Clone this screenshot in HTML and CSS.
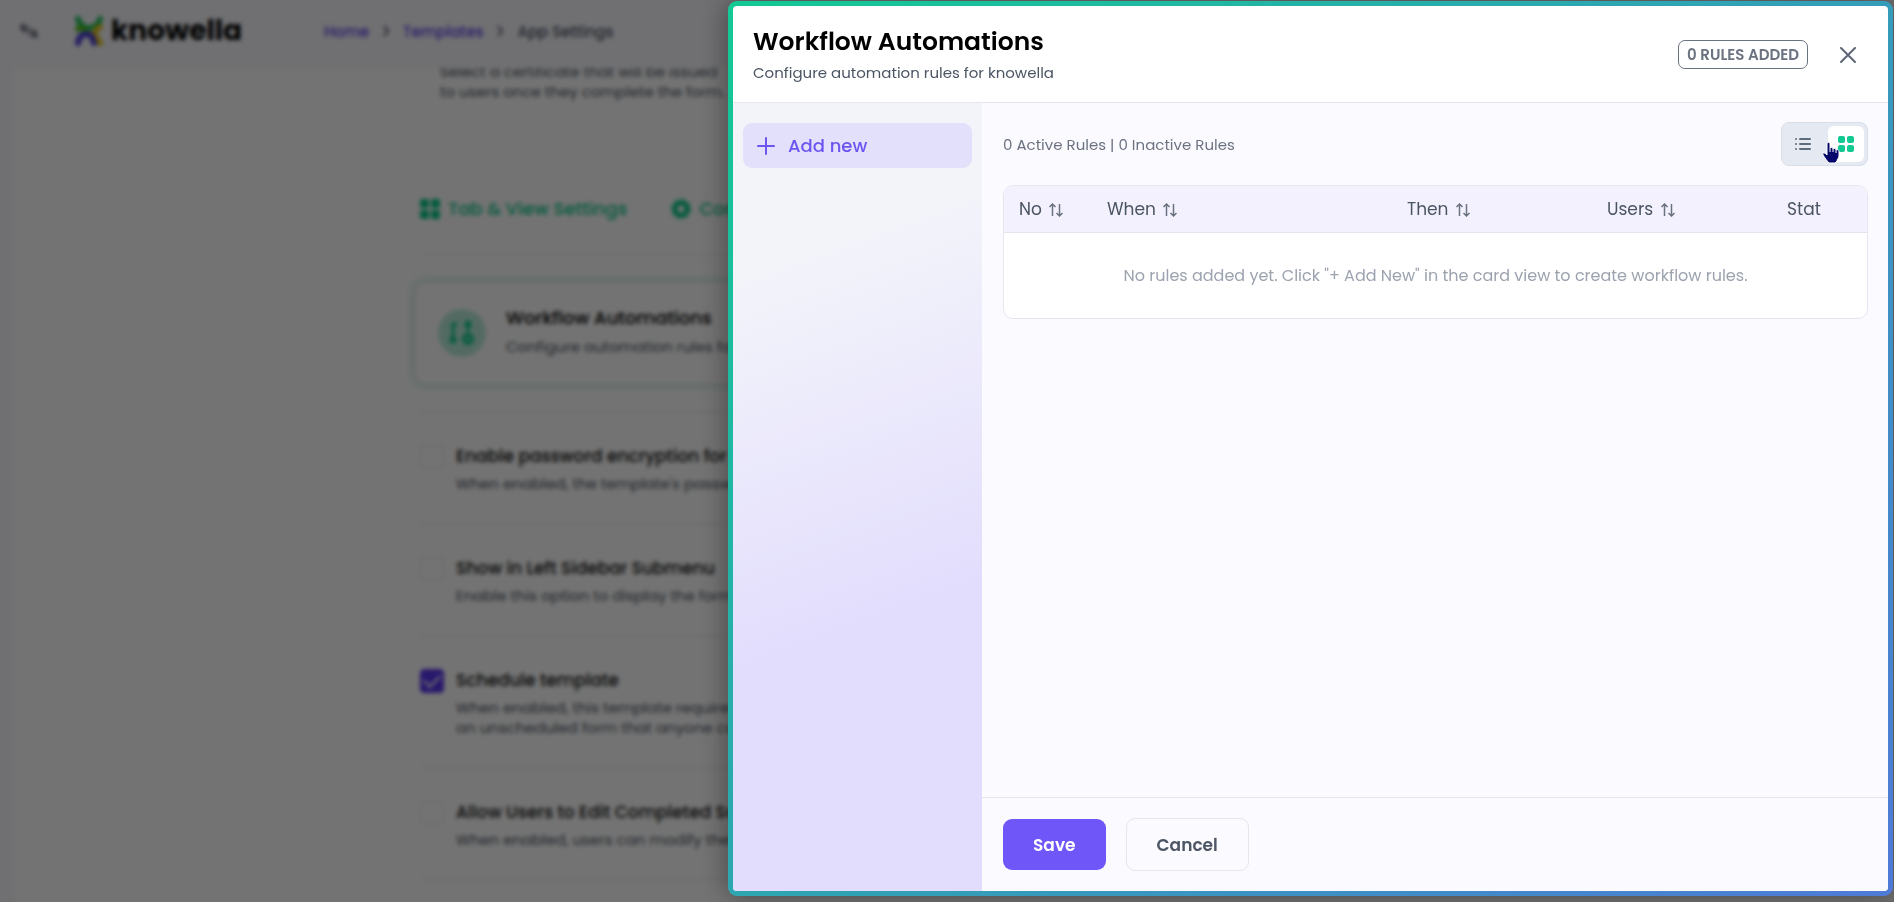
FILE: index.html
```html
<!DOCTYPE html>
<html lang="en">
<head>
  <meta charset="UTF-8">
  <meta name="viewport" content="width=device-width, initial-scale=1.0">
  <title>Workflow Automations - knowella</title>
  <link rel="stylesheet" href="styles.css">
</head>
<body>

<!-- App Settings page -->
<div class="page">
  <header class="topbar">
    <svg class="menu-icon" width="18" height="18" viewBox="0 0 18 18" fill="none" stroke="#55596b" stroke-width="2"><path d="M1 5h8M4 2L1 5l3 3M2 9h14M9 13h8M14 10l3 3-3 3"/></svg>
    <div class="logo">
      <svg width="30" height="32" viewBox="0 0 30 32" fill="none" stroke-width="6" stroke-linecap="round">
        <path d="M4 4c2 7 7 9 11 9s9-2 11-9" stroke="#22c55e"/>
        <path d="M4 14c4-2 6 0 9 3" stroke="#52c41a"/>
        <path d="M26 12c-7 3-7 7 0 16" stroke="#e5c31a"/>
        <path d="M4 28c1-7 5-9 9-9s6 4 7 9" stroke="#4a3fd6"/>
      </svg>
      <span class="logo-text">knowella</span>
    </div>
    <nav class="breadcrumb">
      <a href="#">Home</a>
      <svg width="8" height="12" viewBox="0 0 8 12" fill="none" stroke="#55596b" stroke-width="2"><path d="M2 1l4 5-4 5"/></svg>
      <a href="#">Templates</a>
      <svg width="8" height="12" viewBox="0 0 8 12" fill="none" stroke="#55596b" stroke-width="2"><path d="M2 1l4 5-4 5"/></svg>
      <span>App Settings</span>
    </nav>
  </header>

  <main class="content">
    <div class="settings">
      <p class="certificate-note">Select a certificate that will be issued<br>to users once they complete the form.</p>

      <div class="tabs">
        <a href="#" class="tab">
          <svg width="20" height="20" viewBox="0 0 20 20" fill="currentColor"><rect width="9" height="9" rx="2"/><rect x="11" width="9" height="9" rx="2"/><rect y="11" width="9" height="9" rx="2"/><rect x="11" y="11" width="9" height="9" rx="2"/></svg>
          Tab &amp; View Settings
        </a>
        <a href="#" class="tab">
          <svg width="20" height="20" viewBox="0 0 20 20" fill="none" stroke="currentColor"><circle cx="10" cy="10" r="6" stroke-width="5"/><circle cx="10" cy="10" r="9" stroke-width="2" stroke-dasharray="4 3"/></svg>
          Configuration
        </a>
      </div>

      <div class="automation-card">
        <span class="automation-icon">
          <svg width="26" height="26" viewBox="0 0 26 26" fill="none" stroke="currentColor" stroke-width="3"><path d="M8 4H4v14M19 4v8"/><circle cx="4" cy="20" r="2"/><circle cx="19" cy="4" r="2"/><circle cx="19" cy="19" r="4" stroke-width="4"/></svg>
        </span>
        <div>
          <h2>Workflow Automations</h2>
          <p>Configure automation rules for knowella</p>
        </div>
      </div>

      <div class="option">
        <input type="checkbox" id="opt-encrypt">
        <div>
          <label for="opt-encrypt">Enable password encryption for template</label>
          <p>When enabled, the template's password will be encrypted.</p>
        </div>
      </div>
      <div class="option">
        <input type="checkbox" id="opt-sidebar">
        <div>
          <label for="opt-sidebar">Show in Left Sidebar Submenu</label>
          <p>Enable this option to display the form in the left sidebar.</p>
        </div>
      </div>
      <div class="option">
        <input type="checkbox" id="opt-schedule" checked>
        <div>
          <label for="opt-schedule">Schedule template</label>
          <p>When enabled, this template requires a schedule. Otherwise it is<br>an unscheduled form that anyone can fill out.</p>
        </div>
      </div>
      <div class="option">
        <input type="checkbox" id="opt-edit">
        <div>
          <label for="opt-edit">Allow Users to Edit Completed Submissions</label>
          <p>When enabled, users can modify their completed forms.</p>
        </div>
      </div>
      <div class="option"></div>
    </div>
  </main>
</div>

<!-- Workflow Automations panel -->
<div class="overlay">
  <section class="panel" role="dialog" aria-labelledby="panel-title">
    <div class="panel-inner">
      <header class="panel-header">
        <div>
          <h1 id="panel-title">Workflow Automations</h1>
          <p>Configure automation rules for knowella</p>
        </div>
        <div class="panel-actions">
          <span class="badge">0 RULES ADDED</span>
          <button class="close-button" aria-label="Close">
            <svg width="16" height="16" viewBox="0 0 16 16" fill="none" stroke="currentColor" stroke-width="2" stroke-linecap="round"><path d="M1 1l14 14M15 1L1 15"/></svg>
          </button>
        </div>
      </header>

      <div class="panel-body">
        <aside class="sidebar">
          <button class="add-button">
            <svg width="18" height="18" viewBox="0 0 18 18" fill="none" stroke="currentColor" stroke-width="2" stroke-linecap="round"><path d="M9 1v16M1 9h16"/></svg>
            Add new
          </button>
        </aside>

        <div class="rules">
          <div class="rules-content">
            <div class="rules-toolbar">
              <span>0 Active Rules | 0 Inactive Rules</span>
              <div class="view-toggle">
                <button aria-label="List view">
                  <svg width="16" height="14" viewBox="0 0 16 14" fill="currentColor"><circle cx="1" cy="2" r="1"/><circle cx="1" cy="7" r="1"/><circle cx="1" cy="12" r="1"/><rect x="4" y="1" width="12" height="2" rx="1"/><rect x="4" y="6" width="12" height="2" rx="1"/><rect x="4" y="11" width="12" height="2" rx="1"/></svg>
                </button>
                <button class="active" aria-label="Card view">
                  <svg width="16" height="16" viewBox="0 0 16 16" fill="currentColor"><rect width="7" height="7" rx="2"/><rect x="9" width="7" height="7" rx="2"/><rect y="9" width="7" height="7" rx="2"/><rect x="9" y="9" width="7" height="7" rx="2"/></svg>
                </button>
                <svg class="cursor" width="18" height="22" viewBox="0 0 18 22" fill="#06066b" stroke="#fff" stroke-width="1"><path d="M5 2c0-2 3-2 3 0v4c1-1 3-1 3 1 1-1 3-1 3 1 1-1 3 0 3 1v5c0 2-2 3-2 5l-2 2H7c-2-2-4-5-6-8-1-2 1-3 3-1l1 1z"/><path d="M8 6v4M11 7v3M14 8v3" fill="none"/></svg>
              </div>
            </div>

            <div class="table-box">
              <table>
                <thead>
                  <tr>
                    <th class="col-no">No <svg class="sort" viewBox="0 0 14 14"><path d="M4 13V1M1 4l3-3 3 3M11 1v12M8 10l3 3 3-3"/></svg></th>
                    <th class="col-when">When <svg class="sort" viewBox="0 0 14 14"><path d="M4 13V1M1 4l3-3 3 3M11 1v12M8 10l3 3 3-3"/></svg></th>
                    <th class="col-then">Then <svg class="sort" viewBox="0 0 14 14"><path d="M4 13V1M1 4l3-3 3 3M11 1v12M8 10l3 3 3-3"/></svg></th>
                    <th class="col-users">Users <svg class="sort" viewBox="0 0 14 14"><path d="M4 13V1M1 4l3-3 3 3M11 1v12M8 10l3 3 3-3"/></svg></th>
                    <th>Stat</th>
                  </tr>
                </thead>
                <tbody>
                  <tr>
                    <td colspan="5">No rules added yet. Click "+ Add New" in the card view to create workflow rules.</td>
                  </tr>
                </tbody>
              </table>
            </div>
          </div>

          <footer class="panel-footer">
            <button class="save-button">Save</button>
            <button class="cancel-button">Cancel</button>
          </footer>
        </div>
      </div>
    </div>
  </section>
</div>

</body>
</html>
```
FILE: styles.css
```css
* {
  box-sizing: border-box;
}

body {
  margin: 0;
  height: 100vh;
  overflow: hidden;
  font-family: Poppins, Inter, sans-serif;
  font-size: 15px;
  color: #4b5563;
  background-color: #f8f8fd;
}

h1, h2, p {
  margin: 0;
}

button {
  font-family: inherit;
  border: none;
  background: none;
  padding: 0;
  cursor: pointer;
}

/* Page */
.page {
  height: 100vh;
  display: flex;
  flex-direction: column;
}

.topbar {
  height: 68px;
  flex-shrink: 0;
  display: flex;
  align-items: center;
  padding: 0 20px 6px;
}

.logo {
  display: flex;
  align-items: center;
  gap: 7px;
  width: 250px;
  margin-left: 36px;
}

.logo-text {
  font-size: 28px;
  line-height: 32px;
  font-weight: 700;
  color: #000;
}

.breadcrumb {
  display: flex;
  align-items: center;
  gap: 13px;
  font-weight: 500;
}

.breadcrumb a {
  color: #6246ea;
  text-decoration: none;
}

.content {
  flex: 1;
  min-height: 0;
  overflow: hidden;
  margin: 0 14px;
  background-color: #fff;
}

.settings {
  max-width: 1054px;
  margin: 0 auto;
}

.certificate-note {
  margin-top: -6px;
  padding: 0 0 46px 20px;
  line-height: 20px;
}

.tabs {
  display: flex;
  gap: 44px;
  padding: 50px 0 34px;
  border-bottom: 1px solid #eef0f4;
}

.tab {
  display: flex;
  align-items: center;
  gap: 8px;
  font-size: 18px;
  line-height: 22px;
  font-weight: 500;
  color: #08c98a;
  text-decoration: none;
}

.automation-card {
  display: flex;
  align-items: center;
  gap: 20px;
  height: 104px;
  margin: 26px -6px;
  padding: 0 22px;
  border: 2px solid #e6f4f0;
  border-radius: 12px;
  box-shadow: 0 0 8px 2px #d0efe5;
}

.automation-icon {
  display: flex;
  align-items: center;
  justify-content: center;
  width: 48px;
  height: 48px;
  border-radius: 50%;
  background-color: #b9ecdb;
  color: #08c98a;
}

.automation-card h2 {
  font-size: 18px;
  line-height: 28px;
  font-weight: 500;
  color: #000;
}

.automation-card p {
  line-height: 30px;
}

.option {
  display: flex;
  align-items: flex-start;
  gap: 12px;
  padding: 30px 0 29px;
  border-top: 1px solid #e3e5ec;
}

.option label {
  display: block;
  font-size: 17px;
  line-height: 28px;
  font-weight: 500;
  color: #111;
}

.option p {
  padding-top: 4px;
  line-height: 20px;
}

.option input {
  appearance: none;
  width: 24px;
  height: 24px;
  margin: 3px 0 0;
  border: 1px solid #e8e9f0;
  border-radius: 4px;
}

.option input:checked {
  display: grid;
  place-items: center;
  padding-bottom: 5px;
  background-color: #5a35ee;
  border-color: #5a35ee;
}

.option input:checked::before {
  content: "";
  width: 14px;
  height: 8px;
  border-left: 2px solid #fff;
  border-bottom: 2px solid #fff;
  transform: rotate(-45deg);
}

/* Panel */
.overlay {
  position: fixed;
  inset: 0;
  display: flex;
  justify-content: flex-end;
  padding: 1px 1px 6px 0;
  background-color: rgba(0, 0, 0, 0.55);
  backdrop-filter: blur(2px);
}

.panel {
  width: 62%;
  max-width: 1165px;
  padding: 5px;
  border-radius: 9px;
  background: linear-gradient(135deg, #12c993, #4f7ad8);
  box-shadow: 0 0 30px rgba(0, 0, 0, 0.4);
}

.panel-inner {
  height: 100%;
  display: flex;
  flex-direction: column;
  overflow: hidden;
  border-radius: 4px;
  background-color: #fff;
}

.panel-header {
  display: flex;
  align-items: center;
  justify-content: space-between;
  padding: 18px 32px 17px 20px;
  border-bottom: 1px solid #e5e7eb;
}

.panel-header h1 {
  font-size: 25px;
  line-height: 36px;
  font-weight: 600;
  color: #000;
}

.panel-header p {
  line-height: 25px;
}

.panel-actions {
  display: flex;
  align-items: center;
  gap: 32px;
}

.badge {
  padding: 0 8px;
  border: 1px solid #6b7280;
  border-radius: 7px;
  font-size: 15px;
  line-height: 27px;
  font-weight: 600;
  color: #6b7280;
}

.close-button {
  display: flex;
  color: #5f6675;
}

.panel-body {
  flex: 1;
  min-height: 0;
  display: flex;
}

.sidebar {
  width: 249px;
  flex-shrink: 0;
  padding: 20px 10px;
  background: linear-gradient(160deg, #f3f4fa 20%, #e2ddfd 65%);
}

.add-button {
  display: flex;
  align-items: center;
  gap: 13px;
  width: 100%;
  height: 45px;
  padding: 0 14px;
  border-radius: 9px;
  background-color: #e2e0fa;
  font-size: 18px;
  font-weight: 500;
  color: #6e55f0;
}

.rules {
  flex: 1;
  min-width: 0;
  display: flex;
  flex-direction: column;
  background-color: #fbfaff;
}

.rules-content {
  flex: 1;
  padding: 19px 20px 19px 21px;
}

.rules-toolbar {
  display: flex;
  align-items: center;
  justify-content: space-between;
  margin-bottom: 19px;
  color: #6b7280;
}

.view-toggle {
  position: relative;
  display: flex;
  gap: 7px;
  padding: 3px;
  border: 1px solid #d9dfe9;
  border-radius: 8px;
  background-color: #e5eaf2;
}

.view-toggle button {
  display: flex;
  align-items: center;
  justify-content: center;
  width: 36px;
  height: 36px;
  border-radius: 6px;
  color: #5f6b7a;
}

.view-toggle .active {
  background-color: #fff;
  color: #12c893;
}

.cursor {
  position: absolute;
  left: 40px;
  top: 19px;
}

.table-box {
  overflow: hidden;
  border: 1px solid #e5e7f0;
  border-radius: 10px;
  background-color: #fff;
}

table {
  width: 100%;
  table-layout: fixed;
  border-collapse: collapse;
}

th {
  height: 46px;
  padding: 0 0 0 15px;
  border-bottom: 1px solid #e2e6ec;
  background-color: #f3f1fe;
  font-size: 17px;
  font-weight: 400;
  text-align: left;
}

.col-no {
  width: 88px;
}

.col-when {
  width: 300px;
}

.col-then {
  width: 200px;
}

.col-users {
  width: 180px;
}

.sort {
  width: 15px;
  height: 14px;
  margin-left: 2px;
  vertical-align: -2px;
  fill: none;
  stroke: #6b7280;
  stroke-width: 1.5;
}

td {
  height: 86px;
  padding: 0;
  text-align: center;
  font-size: 16px;
  color: #9ca3af;
}

.panel-footer {
  display: flex;
  align-items: center;
  gap: 20px;
  padding: 20px 21px;
  border-top: 1px solid #e5e7eb;
}

.save-button,
.cancel-button {
  height: 53px;
  padding: 0 30px;
  border-radius: 9px;
  font-size: 17px;
  font-weight: 600;
}

.save-button {
  height: 51px;
  background-color: #6f56f8;
  color: #fff;
}

.cancel-button {
  border: 1px solid #e5e7eb;
  color: #4b5563;
}
```
